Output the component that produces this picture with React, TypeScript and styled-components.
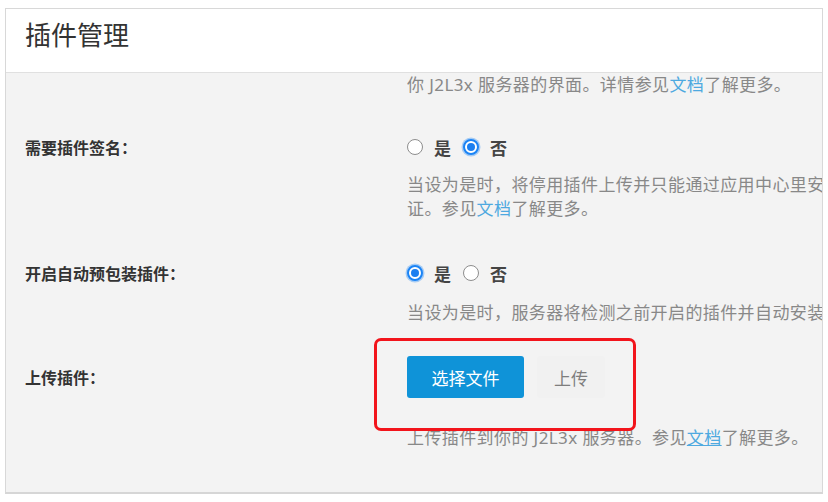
import React from "react";
import styled, { createGlobalStyle } from "styled-components";

const GlobalStyle = createGlobalStyle`
  html, body {
    margin: 0;
    padding: 0;
    background: #ffffff;
  }
  body {
    font-family: "Noto Sans", "Noto Sans CJK SC", sans-serif;
  }
`;

type RadioOption = { label: string; checked: boolean };

const App: React.FC = () => {
  return (
    <>
      <GlobalStyle />
      <Page>
        <Panel>
          <Header>
            <Title>插件管理</Title>
          </Header>
          <Body>
            <Desc>
              你 J2L3x 服务器的界面。详情参见<Link>文档</Link>了解更多。
            </Desc>

            <Row $top={38}>
              <Label>需要插件签名：</Label>
              <RadioGroup
                options={[
                  { label: "是", checked: false },
                  { label: "否", checked: true },
                ]}
              />
              <Desc $top={14}>
                当设为是时，将停用插件上传并只能通过应用中心里安
                <br />
                证。参见<Link>文档</Link>了解更多。
              </Desc>
            </Row>

            <Row $top={40}>
              <Label>开启自动预包装插件：</Label>
              <RadioGroup
                options={[
                  { label: "是", checked: true },
                  { label: "否", checked: false },
                ]}
              />
              <Desc $top={16}>
                当设为是时，服务器将检测之前开启的插件并自动安装
              </Desc>
            </Row>

            <Row $top={31}>
              <Label>上传插件：</Label>
              <Buttons>
                <PrimaryButton>选择文件</PrimaryButton>
                <GhostButton>上传</GhostButton>
                <Highlight />
              </Buttons>
              <Desc $top={28}>
                上传插件到你的 J2L3x 服务器。参见<Link $underline>文档</Link>了解更多。
              </Desc>
            </Row>
          </Body>
        </Panel>
      </Page>
    </>
  );
};

const RadioGroup: React.FC<{ options: RadioOption[] }> = ({ options }) => (
  <Radios>
    {options.map((o) => (
      <RadioItem key={o.label}>
        <RadioDot $checked={o.checked} />
        <RadioText>{o.label}</RadioText>
      </RadioItem>
    ))}
  </Radios>
);

export default App;

// Styled Components
const Page = styled.div`
  padding: 8px 5px 8px 5px;
  width: 828px;
  height: 502px;
  box-sizing: border-box;
`;

const Panel = styled.div`
  display: flex;
  flex-direction: column;
  height: 100%;
  box-sizing: border-box;
  border: 1px solid #d8d8d8;
  border-bottom: 2px solid #d6d6d6;
  overflow: hidden;
  background: #f3f3f3;
`;

const Header = styled.div`
  height: 64px;
  flex-shrink: 0;
  box-sizing: border-box;
  background: #ffffff;
  border-bottom: 1px solid #e0e0e0;
  padding: 11px 19px 0;
`;

const Title = styled.h1`
  margin: 0;
  font-size: 26px;
  line-height: 30px;
  font-weight: 400;
  color: #333;
`;

const Body = styled.div`
  flex: 1;
  padding: 0 0 0 19px;
  overflow: hidden;
`;

const Row = styled.div<{ $top: number }>`
  display: grid;
  grid-template-columns: 382px 1fr;
  margin-top: ${(p) => p.$top}px;

  & > ${"*"}:nth-child(3) {
    grid-column: 2;
  }
`;

const Label = styled.div`
  align-self: center;
  font-size: 16px;
  font-weight: 700;
  color: #333;
  white-space: nowrap;
`;

const Desc = styled.div<{ $top?: number }>`
  margin-top: ${(p) => p.$top ?? 0}px;
  padding-left: 382px;
  font-size: 17px;
  letter-spacing: 0.4px;
  line-height: 24px;
  color: #888;
  white-space: nowrap;

  ${Row} & {
    padding-left: 0;
  }
`;

const Link = styled.span<{ $underline?: boolean }>`
  color: #4ea9e0;
  text-decoration: ${(p) => (p.$underline ? "underline" : "none")};
`;

const Radios = styled.div`
  display: flex;
  align-items: center;
  height: 24px;
  gap: 12px;
`;

const RadioItem = styled.label`
  display: flex;
  align-items: center;
  gap: 11px;
`;

const RadioDot = styled.span<{ $checked: boolean }>`
  position: relative;
  width: 16px;
  height: 16px;
  box-sizing: border-box;
  border-radius: 50%;
  background: #fff;
  border: ${(p) => (p.$checked ? "2px solid #1b84f5" : "1px solid #8d8d8d")};
  box-shadow: ${(p) => (p.$checked ? "0 0 0 1.5px rgba(27,132,245,0.35)" : "none")};

  &::after {
    content: "";
    display: ${(p) => (p.$checked ? "block" : "none")};
    position: absolute;
    left: 2px;
    top: 2px;
    width: 8px;
    height: 8px;
    border-radius: 50%;
    background: #1b7ff0;
  }
`;

const RadioText = styled.span`
  font-size: 17px;
  font-weight: 700;
  color: #444;
`;

const Buttons = styled.div`
  position: relative;
  display: flex;
  align-items: center;
  gap: 13px;
`;

const PrimaryButton = styled.button`
  width: 117px;
  height: 42px;
  border: none;
  border-radius: 3px;
  background: #0f93d8;
  color: #fff;
  font-family: inherit;
  font-size: 17px;
  cursor: pointer;
`;

const GhostButton = styled.button`
  height: 42px;
  padding: 0 17px;
  border: none;
  border-radius: 3px;
  background: #f1f1f1;
  color: #7e7e7e;
  font-family: inherit;
  font-size: 17px;
`;

const Highlight = styled.div`
  position: absolute;
  left: -33px;
  top: -18px;
  width: 262px;
  height: 93px;
  box-sizing: border-box;
  border: 3px solid #f2141b;
  border-radius: 7px;
  pointer-events: none;
`;
